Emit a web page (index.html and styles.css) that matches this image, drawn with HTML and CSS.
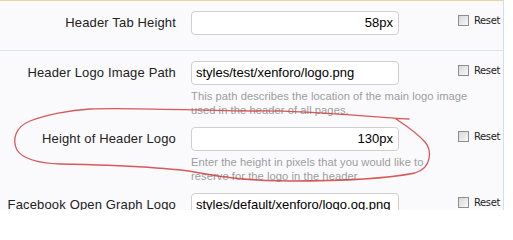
FILE: index.html
```html
<!DOCTYPE html>
<html>
<head>
<meta charset="utf-8">
<link rel="stylesheet" href="styles.css">
</head>
<body>
<div class="stage">
  <div class="panel">
    <div class="row sep">
      <div class="label">Header Tab Height</div>
      <div class="field">
        <div class="input num">58px</div>
      </div>
      <div class="reset"><span class="cb"></span>Reset</div>
    </div>
    <div class="row">
      <div class="label">Header Logo Image Path</div>
      <div class="field">
        <div class="input">styles/test/xenforo/logo.png</div>
        <div class="explain">This path describes the location of the main logo image used in the header of all pages.</div>
      </div>
      <div class="reset"><span class="cb"></span>Reset</div>
    </div>
    <div class="row">
      <div class="label">Height of Header Logo</div>
      <div class="field">
        <div class="input num">130px</div>
        <div class="explain narrow">Enter the height in pixels that you would like to reserve for the logo in the header.</div>
      </div>
      <div class="reset"><span class="cb"></span>Reset</div>
    </div>
    <div class="row">
      <div class="label">Facebook Open Graph Logo</div>
      <div class="field">
        <div class="input">styles/default/xenforo/logo.og.png</div>
      </div>
      <div class="reset"><span class="cb"></span>Reset</div>
    </div>
  </div>
  <svg class="scribble" width="513" height="210" viewBox="0 0 513 210">
    <path d="M409,119 C360,116 300,110 256,111 C200,111 130,107 90,109 C70,110 45,115 30,121 C15,127 12,140 17,150 C22,158 35,163 60,164 C110,165 170,167 200,173 C225,178 250,181 290,181 C340,181 390,178 415,173 C432,168 432,150 425,142 C416,132 405,125 396,119" />
  </svg>
</div>
</body>
</html>
```
FILE: styles.css
```css
html, body {
  margin: 0;
  padding: 0;
  background: #ffffff;
}
.stage {
  position: relative;
  width: 513px;
  height: 210px;
  overflow: hidden;
  font-family: "Liberation Sans", Arial, sans-serif;
}
.panel {
  width: 504px;
  height: 210px;
  box-sizing: border-box;
  background: #fafafc;
  border-top: 1px solid #e6d3a7;
  border-right: 1px solid #cfe0ea;
}
.row {
  display: grid;
  grid-template-columns: 176px 208px 1fr;
  column-gap: 15px;
  padding-top: 10px;
}
.row.sep {
  padding-bottom: 15px;
  border-bottom: 1px solid #d8e6ee;
  width: 503px;
  box-sizing: border-box;
}
.label {
  text-align: right;
  font-size: 13px;
  letter-spacing: 0.15px;
  color: #222;
  line-height: 24px;
  white-space: nowrap;
}
.field {
  display: flex;
  flex-direction: column;
}
.input {
  height: 24px;
  box-sizing: border-box;
  border: 1px solid #cfcfcf;
  border-radius: 4px;
  background: #ffffff;
  font-size: 13px;
  line-height: 22px;
  color: #000;
  padding: 0 5px 0 4px;
  white-space: nowrap;
  overflow: hidden;
}
.input.num {
  text-align: right;
}
.explain {
  width: 280px;
  margin-top: 4px;
  font-size: 11.2px;
  letter-spacing: 0.05px;
  line-height: 14px;
  color: #9d9d9d;
}
.explain.narrow {
  width: 268px;
}
.reset {
  display: flex;
  align-items: center;
  align-self: start;
  margin-left: 44px;
  margin-top: 4px;
  font-size: 10px;
  color: #222;
  font-family: "DejaVu Sans", sans-serif;
  letter-spacing: -0.4px;
}
.cb {
  width: 9px;
  height: 9px;
  border: 1px solid #8e8e8e;
  background: linear-gradient(135deg, #d8d8d8, #f8f8f8);
  margin-right: 5px;
}
.scribble {
  position: absolute;
  left: 0;
  top: 0;
  pointer-events: none;
}
.scribble path {
  fill: none;
  stroke: #cf3d3d;
  stroke-width: 1.3;
  stroke-opacity: 0.85;
  stroke-linecap: round;
}
```
